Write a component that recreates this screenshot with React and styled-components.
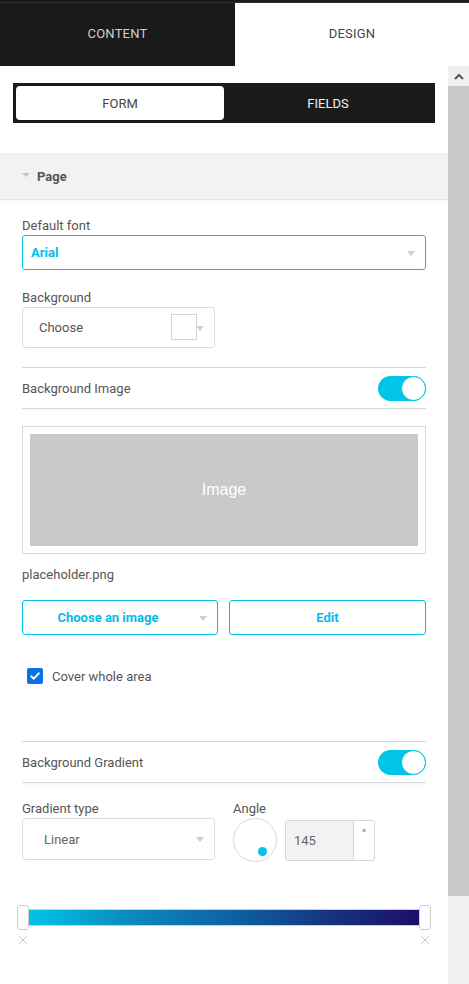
import React from "react";
import styled, { createGlobalStyle } from "styled-components";

const Global = createGlobalStyle`
  html, body {
    margin: 0;
    padding: 0;
    background: #fff;
    overflow: hidden;
  }
  * {
    box-sizing: border-box;
  }
  body {
    font-family: Roboto, "Noto Sans", "Liberation Sans", sans-serif;
    color: #555;
    font-size: 13px;
  }
`;

function App() {
  return (
    <Shell>
      <Global />
      <TopStrip />
      <Tabs>
        <Tab active={false}>CONTENT</Tab>
        <Tab active>DESIGN</Tab>
      </Tabs>
      <Body>
        <Panel>
          <Switcher>
            <SwitchItem active>FORM</SwitchItem>
            <SwitchItem>FIELDS</SwitchItem>
          </Switcher>

          <SectionHeader>
            <HeaderCaret />
            Page
          </SectionHeader>

          <Fields>
            <Label>Default font</Label>
            <Select>
              Arial
              <Caret />
            </Select>

            <Label top={19}>Background</Label>
            <Picker>
              Choose
              <Swatch />
              <Caret />
            </Picker>

            <ToggleRow top={19}>
              Background Image
              <Toggle />
            </ToggleRow>

            <ImageFrame>
              <ImagePlaceholder>Image</ImagePlaceholder>
            </ImageFrame>
            <FileName>placeholder.png</FileName>

            <ButtonRow>
              <OutlineButton withCaret>
                Choose an image
                <Caret />
              </OutlineButton>
              <OutlineButton>Edit</OutlineButton>
            </ButtonRow>

            <CheckRow>
              <CheckBox>
                <svg width="12" height="12" viewBox="0 0 12 12">
                  <path
                    d="M2.2 6.2 L4.8 8.7 L9.8 3.3"
                    fill="none"
                    stroke="#fff"
                    strokeWidth="1.9"
                    strokeLinecap="round"
                    strokeLinejoin="round"
                  />
                </svg>
              </CheckBox>
              Cover whole area
            </CheckRow>

            <ToggleRow top={57}>
              Background Gradient
              <Toggle />
            </ToggleRow>

            <TwoCols>
              <Column>
                <Label>Gradient type</Label>
                <Picker tall>
                  Linear
                  <Caret />
                </Picker>
              </Column>
              <Column>
                <Label>Angle</Label>
                <AngleRow>
                  <Dial>
                    <DialDot />
                  </Dial>
                  <NumberBox>
                    <NumberValue>145</NumberValue>
                    <NumberUnit>°</NumberUnit>
                  </NumberBox>
                </AngleRow>
              </Column>
            </TwoCols>

            <GradientRow>
              <Handle />
              <GradientBar />
              <Handle />
            </GradientRow>
            <RemoveRow>
              <Cross />
              <Cross />
            </RemoveRow>
          </Fields>
        </Panel>

        <Scrollbar>
          <ScrollArrow>
            <svg width="10" height="7" viewBox="0 0 10 7">
              <path d="M1 6 L5 2 L9 6" fill="none" stroke="#555" strokeWidth="2" />
            </svg>
          </ScrollArrow>
          <ScrollThumb />
          <ScrollTrack />
        </Scrollbar>
      </Body>
    </Shell>
  );
}

function Cross() {
  return (
    <svg width="10" height="10" viewBox="0 0 10 10">
      <path d="M1 1 L9 9 M9 1 L1 9" stroke="#c8c8c8" strokeWidth="1" fill="none" />
    </svg>
  );
}

export default App;

const Shell = styled.div`
  width: 469px;
  height: 984px;
  display: flex;
  flex-direction: column;
  overflow: hidden;
`;

const TopStrip = styled.div`
  height: 3px;
  background: #1a1a1a;
  border-bottom: 1px solid #303030;
`;

const Tabs = styled.div`
  display: grid;
  grid-template-columns: 235px 1fr;
  height: 63px;
`;

const Tab = styled.div`
  display: flex;
  align-items: center;
  justify-content: center;
  font-size: 13px;
  letter-spacing: 0.2px;
  background: ${(p) => (p.active ? "#fff" : "#1a1a1a")};
  color: ${(p) => (p.active ? "#444" : "#d0d0d0")};
  padding-bottom: 2px;
`;

const Body = styled.div`
  flex: 1;
  display: flex;
  min-height: 0;
`;

const Panel = styled.div`
  flex: 1;
  padding-top: 17px;
  overflow: hidden;
`;

const Switcher = styled.div`
  margin: 0 13px;
  height: 40px;
  background: #1a1a1a;
  padding: 3px;
  display: grid;
  grid-template-columns: 1fr 1fr;
`;

const SwitchItem = styled.div`
  display: flex;
  align-items: center;
  justify-content: center;
  border-radius: 4px;
  font-size: 13px;
  background: ${(p) => (p.active ? "#fff" : "transparent")};
  color: ${(p) => (p.active ? "#444" : "#eef3f8")};
`;

const SectionHeader = styled.div`
  margin-top: 30px;
  height: 47px;
  background: #f2f2f2;
  border-bottom: 1px solid #e2e2e2;
  box-shadow: 0 1px 3px rgba(0, 0, 0, 0.04);
  display: flex;
  align-items: center;
  padding-left: 22px;
  font-weight: 700;
  font-size: 13px;
  color: #555;
`;

const HeaderCaret = styled.span`
  width: 0;
  height: 0;
  border-left: 4px solid transparent;
  border-right: 4px solid transparent;
  border-top: 4px solid #c4c4c4;
  margin-right: 7px;
  margin-top: -3px;
`;

const Fields = styled.div`
  padding: 17px 22px 0;
  display: flex;
  flex-direction: column;
`;

const Label = styled.div`
  margin-top: ${(p) => (p.top ?? 0)}px;
  line-height: 18px;
  font-size: 13px;
  color: #555;
`;

const Caret = styled.span`
  position: absolute;
  right: 10px;
  top: 50%;
  margin-top: -2px;
  width: 0;
  height: 0;
  border-left: 4px solid transparent;
  border-right: 4px solid transparent;
  border-top: 5px solid #cfcfcf;
`;

const Select = styled.div`
  position: relative;
  height: 35px;
  border: 1px solid #00c0e8;
  border-radius: 3px;
  display: flex;
  align-items: center;
  padding-left: 8px;
  font-weight: 700;
  color: #00bde6;
  font-size: 13px;
`;

const Picker = styled.div`
  position: relative;
  width: 193px;
  height: ${(p) => (p.tall ? 42 : 41)}px;
  border: 1px solid #dcdcdc;
  border-radius: 3px;
  display: flex;
  align-items: center;
  padding-left: ${(p) => (p.tall ? 21 : 16)}px;
  font-size: 13px;
  color: ${(p) => (p.tall ? "#666" : "#555")};
`;

const Swatch = styled.span`
  position: absolute;
  right: 17px;
  top: 6px;
  width: 26px;
  height: 26px;
  border: 1px solid #d4d4d4;
  background: #fff;
`;

const ToggleRow = styled.div`
  margin-top: ${(p) => p.top}px;
  height: 42px;
  border-top: 1px solid #d8d8d8;
  border-bottom: 1px solid #d8d8d8;
  box-shadow: 0 4px 5px -3px rgba(0, 0, 0, 0.05);
  display: flex;
  align-items: center;
  justify-content: space-between;
  font-size: 13px;
  color: #555;
`;

const Toggle = styled.span`
  position: relative;
  width: 48px;
  height: 25px;
  border-radius: 13px;
  background: #00c4e8;
  &::after {
    content: "";
    position: absolute;
    right: 0;
    top: 0;
    width: 25px;
    height: 25px;
    border-radius: 50%;
    background: #fff;
    border: 1px solid #00c4e8;
    box-sizing: border-box;
  }
`;

const ImageFrame = styled.div`
  margin-top: 17px;
  border: 1px solid #dadada;
  padding: 7px;
`;

const ImagePlaceholder = styled.div`
  height: 112px;
  background: #c9c9c9;
  color: #fff;
  display: flex;
  align-items: center;
  justify-content: center;
  font-family: "Liberation Sans", Arial, sans-serif;
  font-size: 16px;
`;

const FileName = styled.div`
  margin-top: 13px;
  line-height: 16px;
  font-size: 13px;
  color: #555;
`;

const ButtonRow = styled.div`
  margin-top: 17px;
  display: grid;
  grid-template-columns: 196px 1fr;
  gap: 11px;
`;

const OutlineButton = styled.div`
  position: relative;
  height: 35px;
  border: 1px solid #00c0e8;
  border-radius: 3px;
  display: flex;
  align-items: center;
  justify-content: center;
  font-weight: 700;
  font-size: 13px;
  color: #00bde6;
  padding-right: ${(p) => (p.withCaret ? 24 : 0)}px;
`;

const CheckRow = styled.div`
  margin-top: 33px;
  margin-left: 5px;
  display: flex;
  align-items: center;
  gap: 9px;
  font-size: 13px;
  color: #555;
  height: 16px;
`;

const CheckBox = styled.span`
  width: 16px;
  height: 16px;
  border-radius: 2px;
  background: #0b6fe6;
  display: flex;
  align-items: center;
  justify-content: center;
`;

const TwoCols = styled.div`
  margin-top: 17px;
  display: grid;
  grid-template-columns: 193px 1fr;
  gap: 18px;
`;

const Column = styled.div`
  display: flex;
  flex-direction: column;
`;

const AngleRow = styled.div`
  display: flex;
  align-items: center;
  gap: 8px;
`;

const Dial = styled.div`
  position: relative;
  width: 44px;
  height: 44px;
  border: 1px solid #dadada;
  border-radius: 50%;
`;

const DialDot = styled.span`
  position: absolute;
  left: 24px;
  top: 28px;
  width: 9px;
  height: 9px;
  border-radius: 50%;
  background: #00c4e8;
`;

const NumberBox = styled.div`
  display: flex;
  height: 41px;
  width: 90px;
  border: 1px solid #d8d8d8;
  border-radius: 3px;
  overflow: hidden;
`;

const NumberValue = styled.div`
  flex: 1;
  background: #f2f2f2;
  border-right: 1px solid #d8d8d8;
  display: flex;
  align-items: center;
  padding-left: 8px;
  font-size: 13px;
  color: #666;
`;

const NumberUnit = styled.div`
  width: 20px;
  display: flex;
  justify-content: center;
  padding-top: 6px;
  font-size: 11px;
  color: #666;
`;

const GradientRow = styled.div`
  margin: 43px -5px 0;
  display: flex;
  align-items: center;
  height: 25px;
`;

const Handle = styled.div`
  width: 12px;
  height: 25px;
  border: 1px solid #cfcfcf;
  border-radius: 3px;
  background: #fff;
`;

const GradientBar = styled.div`
  flex: 1;
  height: 17px;
  background: linear-gradient(to right, #00c3e8, #0a8bc0 25%, #0c66a6 50%, #162f7a 80%, #1b0f6a);
  border-top: 1px solid #cfcfcf;
  border-bottom: 1px solid #cfcfcf;
`;

const RemoveRow = styled.div`
  margin: 5px -4px 0 -4px;
  display: flex;
  justify-content: space-between;
`;

const Scrollbar = styled.div`
  width: 21px;
  display: flex;
  flex-direction: column;
  background: #f0f0f0;
`;

const ScrollArrow = styled.div`
  height: 20px;
  display: flex;
  align-items: center;
  justify-content: center;
  background: #f0f0f0;
`;

const ScrollThumb = styled.div`
  height: 810px;
  background: #c9c9c9;
`;

const ScrollTrack = styled.div`
  flex: 1;
  background: #f0f0f0;
`;
